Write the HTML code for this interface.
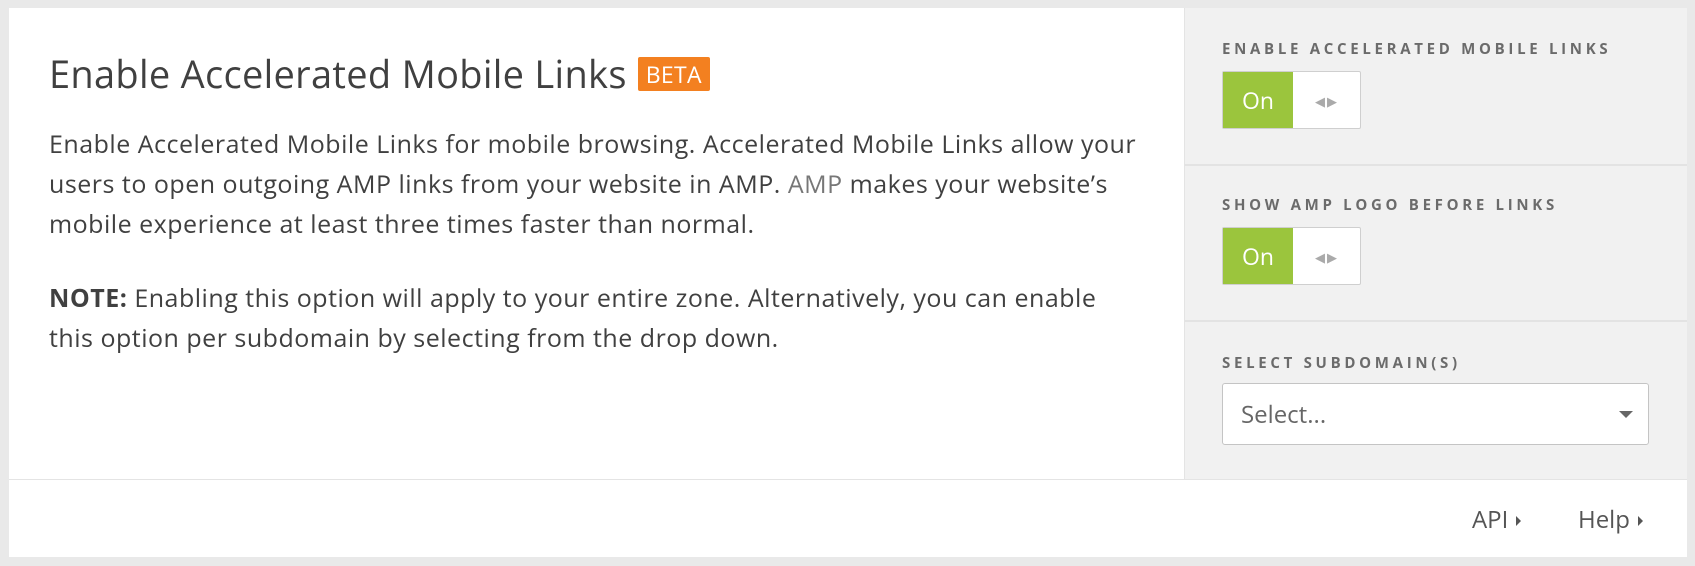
<!DOCTYPE html>
<html><head><meta charset="utf-8"><style>
*{margin:0;padding:0;box-sizing:border-box}
body{width:1695px;height:566px;background:#e9e9e9;font-family:"Open Sans","Liberation Sans",sans-serif;position:relative;overflow:hidden;color:#404040}
.card{position:absolute;left:9px;top:8px;width:1678px;height:549px;background:#fff}
.right{position:absolute;left:1184px;top:8px;width:503px;height:471px;background:#f1f1f1;border-left:1px solid #e4e4e4}
.sep{position:absolute;left:1184px;width:503px;height:2px;background:#e3e3e3}
.foot{position:absolute;left:9px;top:479px;width:1678px;height:1px;background:#e4e4e4}
h1{position:absolute;left:49px;top:48px;font-weight:normal;font-size:38px;color:#404040;white-space:nowrap;letter-spacing:0.3px}
.beta{display:inline-block;background:#f38020;color:#fff;font-size:23px;padding:2px 8px;border-radius:2px;vertical-align:5px;margin-left:11px;line-height:30px}
.p{position:absolute;left:49px;font-size:25px;line-height:40px;white-space:nowrap;letter-spacing:0.5px;color:#404040}
.lbl{position:absolute;left:1222px;font-size:15px;font-weight:bold;letter-spacing:3.7px;color:#6b6b6b}
.tog{position:absolute;left:1222px;width:139px;height:58px;border:1px solid #cfcfcf;border-radius:2px;background:#fff}
.tog .on{position:absolute;left:0;top:0;width:70px;height:56px;background:#9bc53d;color:#fff;font-size:23px;text-align:center;line-height:56px}
.tog .ar{position:absolute;left:92px;top:20px;font-size:13px;color:#aaa;letter-spacing:2px}
.sel{position:absolute;left:1222px;top:383px;width:427px;height:62px;background:#fff;border:1px solid #c4c4c4;border-radius:3px}
.sel span{position:absolute;left:18px;top:14px;font-size:24px;color:#666}
.sel i{position:absolute;right:15px;top:27px;width:0;height:0;border-left:7px solid transparent;border-right:7px solid transparent;border-top:7px solid #666}
.fl{position:absolute;top:503px;font-size:24px;color:#555}
.fl b{display:inline-block;width:0;height:0;border-top:5px solid transparent;border-bottom:5px solid transparent;border-left:5px solid #555;margin-left:8px;vertical-align:2px}
</style></head><body>
<div class="card"></div>
<div class="right"></div>
<div class="sep" style="top:164px"></div>
<div class="sep" style="top:320px"></div>
<div class="foot"></div>
<h1>Enable Accelerated Mobile Links<span class="beta">BETA</span></h1>
<div class="p" style="top:124px">Enable Accelerated Mobile Links for mobile browsing. Accelerated Mobile Links allow your<br>users to open outgoing AMP links from your website in AMP. <span style="color:#777">AMP</span> makes your website’s<br>mobile experience at least three times faster than normal.</div>
<div class="p" style="top:278px"><b>NOTE:</b> Enabling this option will apply to your entire zone. Alternatively, you can enable<br>this option per subdomain by selecting from the drop down.</div>
<div class="lbl" style="top:39px">ENABLE ACCELERATED MOBILE LINKS</div>
<div class="tog" style="top:71px"><div class="on">On</div><div class="ar">◀▶</div></div>
<div class="lbl" style="top:195px">SHOW AMP LOGO BEFORE LINKS</div>
<div class="tog" style="top:227px"><div class="on">On</div><div class="ar">◀▶</div></div>
<div class="lbl" style="top:353px">SELECT SUBDOMAIN(S)</div>
<div class="sel"><span>Select...</span><i></i></div>
<div class="fl" style="left:1472px">API<b></b></div>
<div class="fl" style="left:1578px">Help<b></b></div>
</body></html>
